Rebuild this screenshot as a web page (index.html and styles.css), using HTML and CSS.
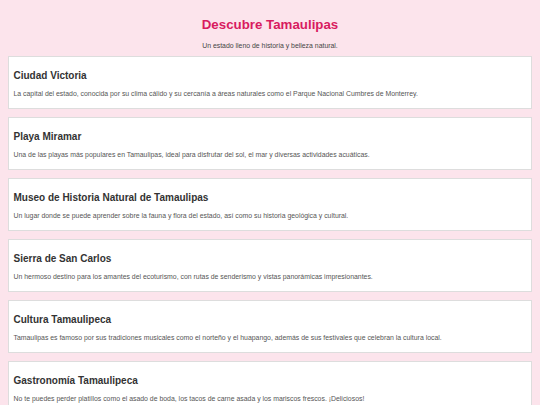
FILE: index.html
```html
<!DOCTYPE html>
<html lang="es">
<head>
<meta charset="utf-8">
<title>Descubre Tamaulipas</title>
<link rel="stylesheet" href="styles.css">
</head>
<body>
<header class="hero">
  <h1 class="hero-title">Descubre Tamaulipas</h1>
  <p class="hero-sub">Un estado lleno de historia y belleza natural.</p>
</header>
<main class="list">
  <section class="card">
    <h2 class="card-title">Ciudad Victoria</h2>
    <p class="card-text">La capital del estado, conocida por su clima cálido y su cercanía a áreas naturales como el Parque Nacional Cumbres de Monterrey.</p>
  </section>
  <section class="card">
    <h2 class="card-title">Playa Miramar</h2>
    <p class="card-text">Una de las playas más populares en Tamaulipas, ideal para disfrutar del sol, el mar y diversas actividades acuáticas.</p>
  </section>
  <section class="card">
    <h2 class="card-title">Museo de Historia Natural de Tamaulipas</h2>
    <p class="card-text">Un lugar donde se puede aprender sobre la fauna y flora del estado, así como su historia geológica y cultural.</p>
  </section>
  <section class="card">
    <h2 class="card-title">Sierra de San Carlos</h2>
    <p class="card-text">Un hermoso destino para los amantes del ecoturismo, con rutas de senderismo y vistas panorámicas impresionantes.</p>
  </section>
  <section class="card">
    <h2 class="card-title">Cultura Tamaulipeca</h2>
    <p class="card-text">Tamaulipas es famoso por sus tradiciones musicales como el norteño y el huapango, además de sus festivales que celebran la cultura local.</p>
  </section>
  <section class="card">
    <h2 class="card-title">Gastronomía Tamaulipeca</h2>
    <p class="card-text">No te puedes perder platillos como el asado de boda, los tacos de carne asada y los mariscos frescos. ¡Deliciosos!</p>
  </section>
</main>
</body>
</html>
```
FILE: styles.css
```css
html, body {
  margin: 0;
  padding: 0;
}
body {
  background: #fce4ec;
  font-family: "Liberation Sans", Arial, sans-serif;
  color: #333;
  padding: 0 8px;
}
.hero {
  text-align: center;
  padding-top: 16.5px;
}
.hero-title {
  margin: 0;
  font-size: 13.3px;
  line-height: 15.3px;
  font-weight: bold;
  color: #d81b60;
}
.hero-sub {
  margin: 10px 0 0;
  font-size: 6.9px;
  line-height: 8px;
  color: #444;
}
.list {
  margin-top: 6px;
  display: flex;
  flex-direction: column;
  gap: 8px;
}
.card {
  background: #fff;
  border: 1px solid #ddd;
  padding: 5px 4.5px;
}
.card-title {
  margin: 8px 0 8.5px;
  font-size: 10px;
  line-height: 11.5px;
  font-weight: bold;
  color: #333;
}
.card-text {
  margin: 0 0 5px;
  font-size: 6.9px;
  line-height: 8px;
  color: #555;
}
```
